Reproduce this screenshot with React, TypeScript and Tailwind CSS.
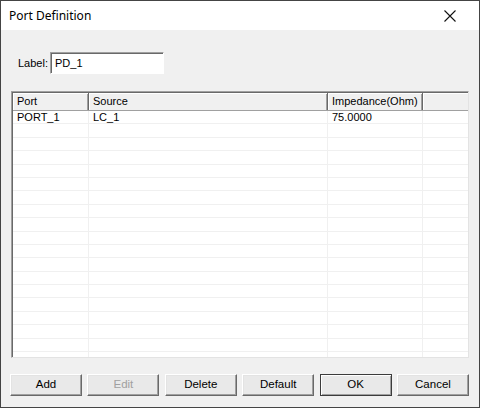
import React from "react";

const rows = Array.from({ length: 19 });

function Btn({ label, disabled, def }: { label: string; disabled?: boolean; def?: boolean }) {
  return (
    <div
      className={
        "w-[72px] h-[22px] flex items-center justify-center bg-[#e9e9e9] border-t border-l border-r border-b " +
        (def
          ? "border-[#3c3c3c] shadow-[inset_1px_1px_0_#ffffff,inset_-1px_-1px_0_#a0a0a0]"
          : "border-t-[#ffffff] border-l-[#ffffff] border-r-[#696969] border-b-[#696969] shadow-[inset_-1px_-1px_0_#a0a0a0,inset_1px_1px_0_#e3e3e3]")
      }
    >
      <span className={"text-[11.5px] leading-none " + (disabled ? "text-[#a0a0a0]" : "text-black")}>{label}</span>
    </div>
  );
}

export default function App() {
  return (
    <div
      className="w-[480px] h-[408px] flex flex-col border border-[#444] bg-[#f0f0f0] overflow-hidden"
      style={{ fontFamily: '"Liberation Sans", Arial, sans-serif' }}
    >
      <div className="h-[29px] shrink-0 bg-white flex items-center justify-between pl-[8px] pr-[23px]">
        <span className="text-[12px] text-black" style={{ fontFamily: '"Noto Sans", sans-serif' }}>
          Port Definition
        </span>
        <svg width="12" height="12" viewBox="0 0 12 12" className="mt-[1px]">
          <path d="M0.5 0.5 L11.5 11.5 M11.5 0.5 L0.5 11.5" stroke="#111" strokeWidth="1.1" />
        </svg>
      </div>

      <div className="flex items-center pl-[17px] mt-[22px] h-[22px]">
        <span className="text-[11px] text-black mr-[2px]">Label:</span>
        <div className="w-[114px] h-[22px] bg-white border-t border-l border-t-[#a0a0a0] border-l-[#a0a0a0] border-r border-b border-r-[#ffffff] border-b-[#ffffff] shadow-[inset_1px_1px_0_#696969] flex items-center pl-[4px]">
          <span className="text-[11px] text-black">PD_1</span>
        </div>
      </div>

      <div className="ml-[10px] mt-[17px] w-[458px] h-[267px] bg-white border-t border-l border-t-[#a0a0a0] border-l-[#a0a0a0] border-r border-b border-r-[#e3e3e3] border-b-[#e3e3e3] shadow-[inset_1px_1px_0_#696969] pl-[1px] pt-[1px] overflow-hidden flex flex-col">
        <div className="flex h-[18px] shrink-0 bg-[#f0f0f0] border-b border-[#a0a0a0] text-[11px] text-black">
          <div className="w-[76px] flex items-center pl-[4px] border-r border-[#696969] shadow-[inset_1px_1px_0_#fff,inset_-1px_0_0_#a0a0a0]">Port</div>
          <div className="w-[239px] flex items-center pl-[4px] border-r border-[#696969] shadow-[inset_1px_1px_0_#fff,inset_-1px_0_0_#a0a0a0]">Source</div>
          <div className="w-[95px] flex items-center pl-[4px] border-r border-[#696969] shadow-[inset_1px_1px_0_#fff,inset_-1px_0_0_#a0a0a0]">Impedance(Ohm)</div>
          <div className="flex-1 shadow-[inset_1px_1px_0_#fff]"></div>
        </div>
        {rows.map((_, i) => (
          <div key={i} className="flex h-[13.4px] shrink-0 border-b border-[#f0f0f0] text-[11px] text-black leading-[12px]">
            <div className="w-[76px] pl-[4px] border-r border-[#f0f0f0] flex items-center">{i === 0 ? "PORT_1" : ""}</div>
            <div className="w-[239px] pl-[4px] border-r border-[#f0f0f0] flex items-center">{i === 0 ? "LC_1" : ""}</div>
            <div className="w-[95px] pl-[4px] border-r border-[#f0f0f0] flex items-center">{i === 0 ? "75.0000" : ""}</div>
            <div className="flex-1"></div>
          </div>
        ))}
      </div>

      <div className="flex justify-between ml-[9px] mr-[10px] mt-[16px]">
        <Btn label="Add" />
        <Btn label="Edit" disabled />
        <Btn label="Delete" />
        <Btn label="Default" />
        <Btn label="OK" def />
        <Btn label="Cancel" />
      </div>
    </div>
  );
}
